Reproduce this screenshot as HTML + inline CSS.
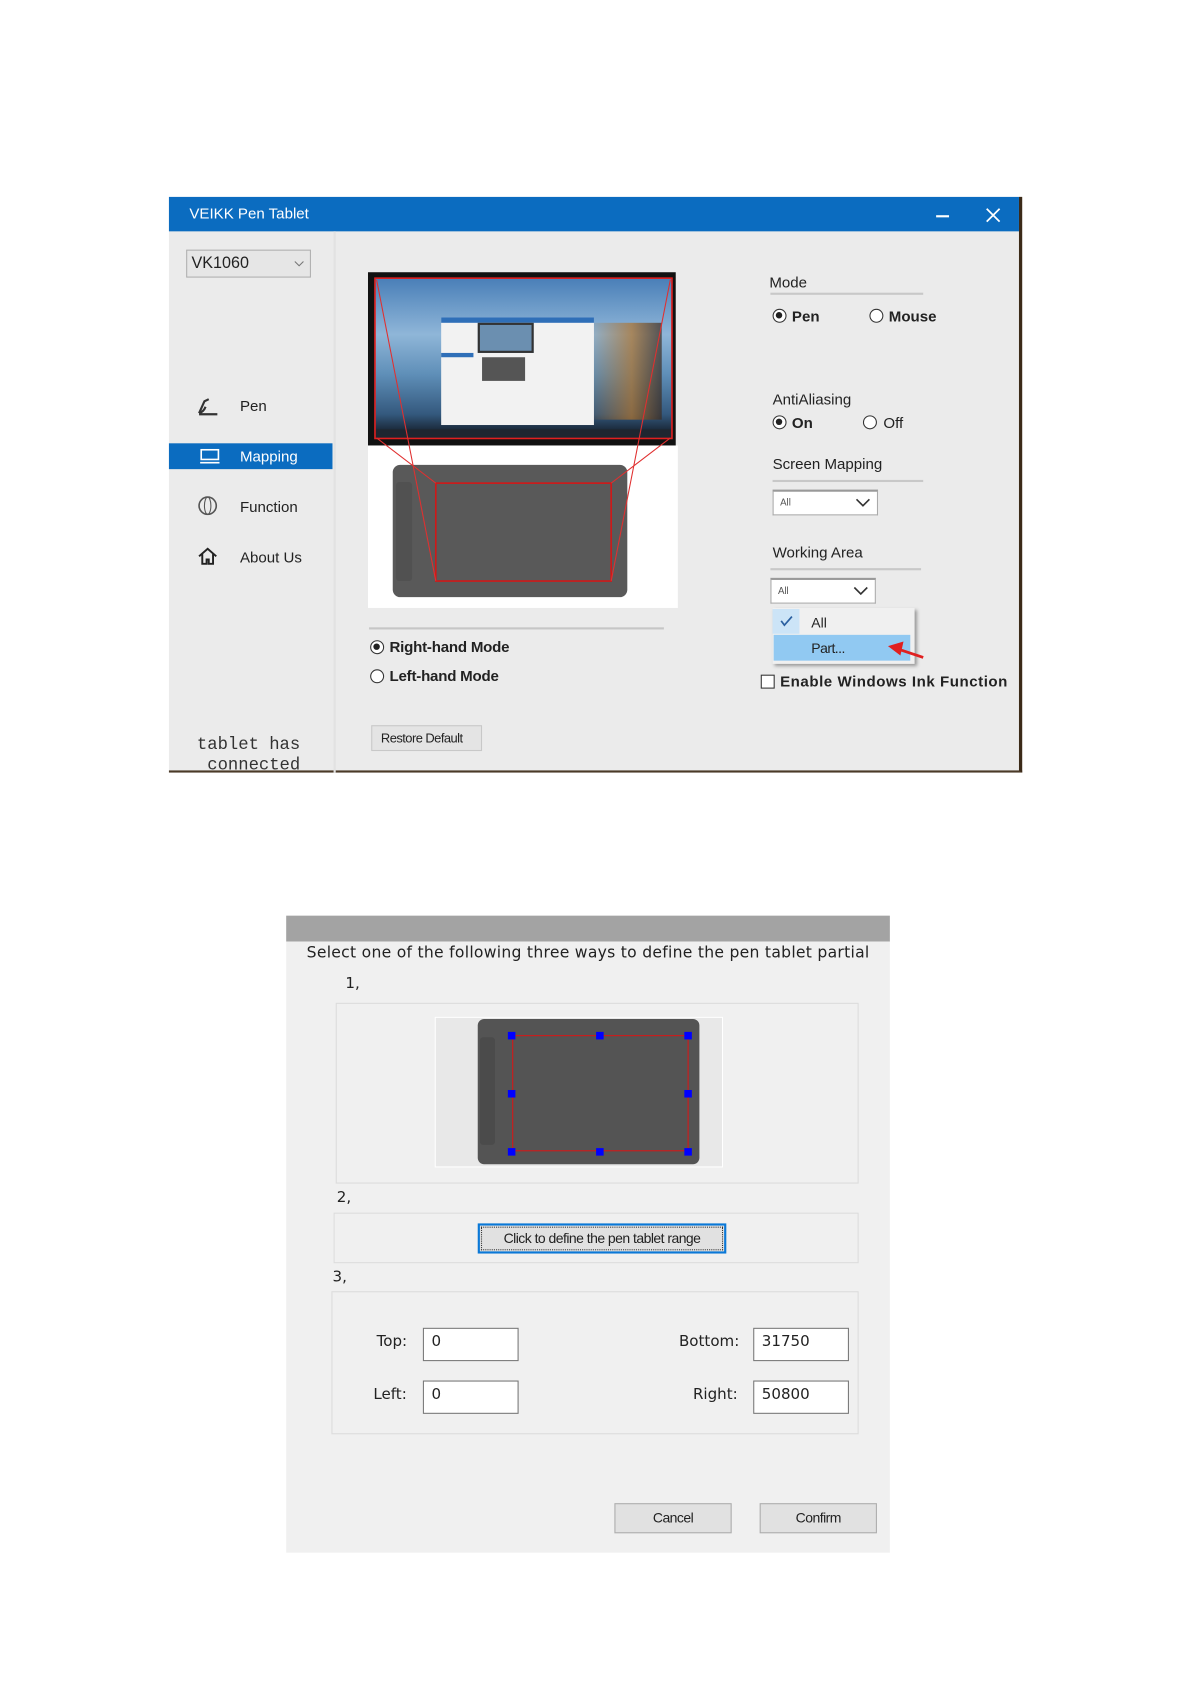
<!DOCTYPE html>
<html><head><meta charset="utf-8"><style>
*{margin:0;padding:0;box-sizing:border-box}
html,body{width:1191px;height:1684px;background:#fff;overflow:hidden}
#w{position:absolute;left:0;top:0;width:1107px;height:1565px;transform:scale(1.076);transform-origin:0 0;font-family:"Liberation Sans","DejaVu Sans",sans-serif}
.a{position:absolute}
.t{position:absolute;white-space:nowrap;font-size:14px;color:#222;line-height:16px}
.b{font-weight:bold}
.radio{position:absolute;width:13px;height:13px;border:1.5px solid #333;border-radius:50%;background:#fff}
.radio.on::after{content:"";position:absolute;left:2px;top:2px;width:6px;height:6px;border-radius:50%;background:#222}
.line{position:absolute;height:2px;background:#c8c8c8}
.combo{position:absolute;background:#fff;border:1px solid #aaa;border-top:2px solid #999}
.combo span{position:absolute;left:6px;top:5px;font-size:9px;color:#555}
.box{position:absolute;border:1px solid #dcdcdc}
.inp{position:absolute;width:89px;height:31px;background:#fff;border:1px solid #777;font-family:"DejaVu Sans",sans-serif;font-size:14px;padding:4px 7px;color:#222}
.lab{position:absolute;font-family:"DejaVu Sans",sans-serif;font-size:14px;color:#222;white-space:nowrap}
.btn{position:absolute;width:109px;height:28px;background:#e1e1e1;border:1px solid #adadad;font-size:13px;text-align:center;line-height:26px;color:#222;letter-spacing:-0.5px}
.sq{position:absolute;width:7px;height:7px;background:#0000ff}
</style></head><body><div id="w">

<div class="a" style="left:157px;top:183px;width:793px;height:535px;background:#ebebeb;border-right:3px solid #3b2a18;border-bottom:2px solid #4b3a28"></div>
<div class="a" style="left:157px;top:183px;width:790px;height:32px;background:#0b6cc0"></div>
<div class="t" style="left:176px;top:190px;color:#fff;font-size:14px">VEIKK Pen Tablet</div>
<div class="a" style="left:870px;top:200px;width:12px;height:2px;background:#fff"></div>
<svg class="a" style="left:916px;top:193px" width="14" height="14"><path d="M1 1L13 13M13 1L1 13" stroke="#fff" stroke-width="1.6"/></svg>
<div class="a" style="left:310px;top:215px;width:2px;height:503px;background:#e2e2e2"></div>
<div class="a" style="left:173px;top:232px;width:116px;height:26px;background:#e6e6e6;border:1px solid #b0b0b0"></div>
<div class="t" style="left:178px;top:237px;font-size:15px">VK1060</div>
<svg class="a" style="left:273px;top:241px" width="10" height="8"><path d="M1 2L5 6L9 2" stroke="#777" fill="none"/></svg>

<svg class="a" style="left:182px;top:367px" width="22" height="20"><path d="M3 17L8 6L12 4M3 17C6 16 8 14 9 11M3 18H20" stroke="#333" stroke-width="2" fill="none"/></svg>
<div class="t" style="left:223px;top:369px">Pen</div>
<div class="a" style="left:157px;top:412px;width:152px;height:24px;background:#0b6cc0"></div>
<svg class="a" style="left:184px;top:416px" width="22" height="16"><rect x="3" y="2" width="16" height="9" stroke="#fff" fill="none" stroke-width="1.5"/><path d="M2 14H20" stroke="#fff" stroke-width="1.5"/></svg>
<div class="t" style="left:223px;top:416px;color:#fff">Mapping</div>
<svg class="a" style="left:183px;top:461px" width="20" height="18"><ellipse cx="10" cy="9" rx="8" ry="8" stroke="#555" fill="none" stroke-width="1.5"/><ellipse cx="10" cy="9" rx="3" ry="8" stroke="#555" fill="none"/></svg>
<div class="t" style="left:223px;top:463px">Function</div>
<svg class="a" style="left:183px;top:508px" width="20" height="18"><path d="M2 9L10 2L18 9M5 7V16H9V12H11V16H15V7" stroke="#222" stroke-width="1.8" fill="none"/></svg>
<div class="t" style="left:223px;top:510px">About Us</div>
<div class="t" style="left:183px;top:683px;font-family:'Liberation Mono',monospace;font-size:16px;line-height:19px;color:#333">tablet has<br>&nbsp;connected</div>

<div class="a" style="left:342px;top:414px;width:288px;height:151px;background:#fff"></div>
<div class="a" style="left:342px;top:253px;width:286px;height:161px;background:#111"></div>
<div class="a" style="left:348px;top:259px;width:276px;height:148px;background:linear-gradient(180deg,#4a7fb8 0%,#8fb6d8 35%,#5f8fb8 60%,#34597e 85%,#1b2a3b 95%)"></div>
<div class="a" style="left:545px;top:300px;width:70px;height:90px;background:linear-gradient(90deg,rgba(0,0,0,0),#b0722a 60%,#3a2a20);opacity:.7"></div>
<div class="a" style="left:410px;top:295px;width:142px;height:100px;background:#f2f2f2"></div>
<div class="a" style="left:410px;top:295px;width:142px;height:5px;background:#2f6fb8"></div>
<div class="a" style="left:444px;top:300px;width:52px;height:28px;background:#6b8fb0;border:2px solid #333"></div>
<div class="a" style="left:448px;top:332px;width:40px;height:22px;background:#555"></div>
<div class="a" style="left:410px;top:328px;width:30px;height:4px;background:#2f6fb8"></div>
<div class="a" style="left:348px;top:399px;width:276px;height:8px;background:#1e2630"></div>
<div class="a" style="left:365px;top:432px;width:218px;height:123px;background:#595959;border-radius:7px"></div>
<div class="a" style="left:368px;top:448px;width:15px;height:92px;background:#515151;border-radius:3px"></div>
<svg class="a" style="left:0;top:0" width="700" height="600"><rect x="348.5" y="258.5" width="276" height="149" fill="none" stroke="#e02020" stroke-width="1.5"/><rect x="405" y="449" width="163" height="91" fill="none" stroke="#d01818" stroke-width="1.5"/><path d="M350 260L405 540M623 260L568 540M350 407L405 449M623 407L568 449" stroke="#e03030" stroke-width="1"/></svg>

<div class="a" style="left:343px;top:583px;width:274px;height:2px;background:#c6c6c6"></div>
<div class="radio on" style="left:344px;top:595px"></div><div class="t b" style="left:362px;top:593px;letter-spacing:-0.2px">Right-hand Mode</div>
<div class="radio" style="left:344px;top:622px"></div><div class="t b" style="left:362px;top:620px;letter-spacing:-0.2px">Left-hand Mode</div>
<div class="a" style="left:345px;top:674px;width:103px;height:24px;background:#e4e4e4;border:1px solid #c8c8c8"></div>
<div class="t" style="left:354px;top:678px;font-size:12px;letter-spacing:-0.5px">Restore Default</div>

<div class="t" style="left:715px;top:254px">Mode</div><div class="line" style="left:716px;top:272px;width:142px"></div>
<div class="radio on" style="left:718px;top:287px"></div><div class="t b" style="left:736px;top:286px">Pen</div>
<div class="radio" style="left:808px;top:287px"></div><div class="t b" style="left:826px;top:286px">Mouse</div>
<div class="t" style="left:718px;top:363px">AntiAliasing</div>
<div class="radio on" style="left:718px;top:386px"></div><div class="t b" style="left:736px;top:385px">On</div>
<div class="radio" style="left:802px;top:386px"></div><div class="t" style="left:821px;top:385px">Off</div>
<div class="t" style="left:718px;top:423px">Screen Mapping</div><div class="line" style="left:718px;top:446px;width:140px"></div>
<div class="combo" style="left:718px;top:455px;width:98px;height:24px"><span>All</span></div>
<svg class="a" style="left:795px;top:462px" width="14" height="10"><path d="M1 2L7 8L13 2" stroke="#333" stroke-width="1.5" fill="none"/></svg>
<div class="t" style="left:718px;top:505px">Working Area</div><div class="line" style="left:716px;top:528px;width:140px"></div>
<div class="combo" style="left:716px;top:537px;width:98px;height:24px"><span>All</span></div>
<svg class="a" style="left:793px;top:544px" width="14" height="10"><path d="M1 2L7 8L13 2" stroke="#333" stroke-width="1.5" fill="none"/></svg>
<div class="a" style="left:718px;top:565px;width:132px;height:52px;background:#f0f0f0;box-shadow:2px 2px 3px #999"></div>
<div class="a" style="left:718px;top:566px;width:25px;height:23px;background:#cce4f7"></div>
<svg class="a" style="left:724px;top:571px" width="14" height="12"><path d="M2 6L5 10L12 2" stroke="#2a5fa0" stroke-width="1.6" fill="none"/></svg>
<div class="t" style="left:754px;top:571px;font-size:13px">All</div>
<div class="a" style="left:719px;top:590px;width:127px;height:24px;background:#91c9f2"></div>
<div class="t" style="left:754px;top:595px;font-size:13px;letter-spacing:-0.5px">Part...</div>
<svg class="a" style="left:822px;top:594px" width="40" height="22"><path d="M6 7L36 17M6 7L16 4L14 13Z" stroke="#e02020" stroke-width="2.5" fill="#e02020"/></svg>
<div class="a" style="left:707px;top:627px;width:13px;height:13px;background:#fff;border:1.5px solid #333"></div>
<div class="t b" style="left:725px;top:625px;letter-spacing:0.5px">Enable Windows Ink Function</div>

<div class="a" style="left:266px;top:851px;width:561px;height:592px;background:#f0f0f0"></div>
<div class="a" style="left:266px;top:851px;width:561px;height:24px;background:#a3a3a3"></div>
<div class="lab" style="left:285px;top:878px;font-size:14.5px;letter-spacing:0.25px">Select one of the following three ways to define the pen tablet partial</div>
<div class="lab" style="left:321px;top:906px">1,</div>
<div class="box" style="left:312px;top:932px;width:486px;height:168px"></div>
<div class="a" style="left:404px;top:945px;width:268px;height:140px;background:#e8e8e8;border:1px solid #fff"></div>
<div class="a" style="left:444px;top:947px;width:206px;height:135px;background:#545454;border-radius:6px"></div>
<div class="a" style="left:446px;top:964px;width:14px;height:100px;background:#4b4b4b;border-radius:3px"></div>
<div class="a" style="left:476px;top:962px;width:164px;height:108px;border:1.5px solid #d41818"></div>
<div class="sq" style="left:472px;top:959px"></div><div class="sq" style="left:554px;top:959px"></div><div class="sq" style="left:636px;top:959px"></div>
<div class="sq" style="left:472px;top:1013px"></div><div class="sq" style="left:636px;top:1013px"></div>
<div class="sq" style="left:472px;top:1067px"></div><div class="sq" style="left:554px;top:1067px"></div><div class="sq" style="left:636px;top:1067px"></div>
<div class="lab" style="left:313px;top:1105px">2,</div>
<div class="box" style="left:310px;top:1127px;width:488px;height:47px"></div>
<div class="a" style="left:444px;top:1137px;width:231px;height:28px;background:#e1e1e1;border:2px solid #0a78d7;outline:1px dotted #333;outline-offset:-4px"></div>
<div class="t" style="left:444px;top:1143px;width:231px;text-align:center;font-size:13px;letter-spacing:-0.5px">Click to define the pen tablet range</div>
<div class="lab" style="left:309px;top:1179px">3,</div>
<div class="box" style="left:308px;top:1200px;width:490px;height:133px"></div>
<div class="lab" style="left:350px;top:1239px">Top:</div><div class="inp" style="left:393px;top:1234px">0</div>
<div class="lab" style="left:631px;top:1239px">Bottom:</div><div class="inp" style="left:700px;top:1234px">31750</div>
<div class="lab" style="left:347px;top:1288px">Left:</div><div class="inp" style="left:393px;top:1283px">0</div>
<div class="lab" style="left:644px;top:1288px">Right:</div><div class="inp" style="left:700px;top:1283px">50800</div>
<div class="btn" style="left:571px;top:1397px">Cancel</div>
<div class="btn" style="left:706px;top:1397px">Confirm</div>
</div></body></html>
